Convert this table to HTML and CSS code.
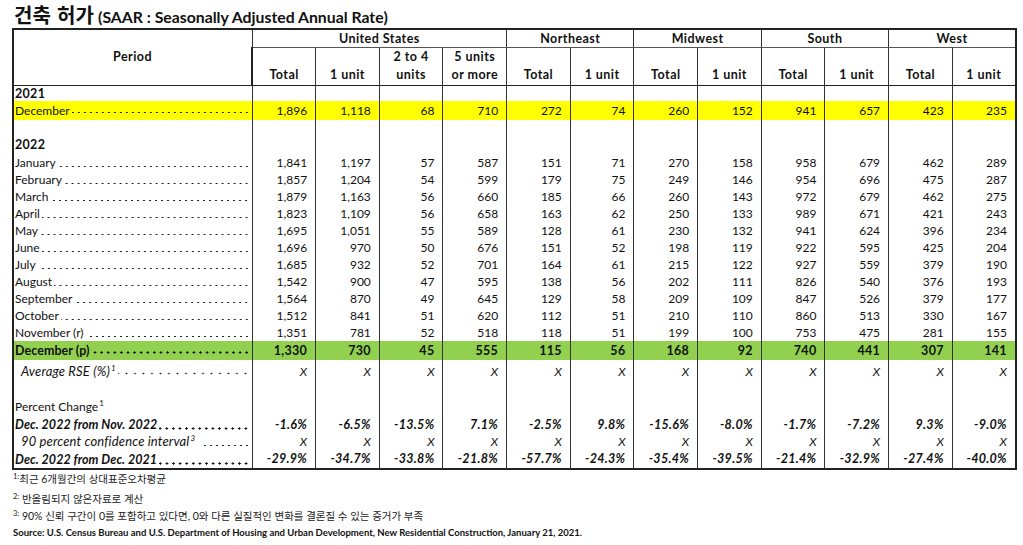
FILE: index.html
```html
<!DOCTYPE html>
<html lang="ko">
<head>
<meta charset="utf-8">
<title>건축 허가</title>
<link rel="stylesheet" href="styles.css">
</head>
<body>
<div class="page">
  <h1 class="title"><span class="ko">건축 허가</span> (SAAR : Seasonally Adjusted Annual Rate)</h1>
  <table class="grid">
    <colgroup>
      <col class="c-period">
      <col><col><col><col><col><col><col><col><col><col><col><col>
    </colgroup>
    <thead>
      <tr class="h1">
        <th rowspan="2" class="period">Period</th>
        <th colspan="4" class="grp">United States</th>
        <th colspan="2" class="grp">Northeast</th>
        <th colspan="2" class="grp">Midwest</th>
        <th colspan="2" class="grp">South</th>
        <th colspan="2" class="grp">West</th>
      </tr>
      <tr class="h2">
        <th>Total</th><th>1 unit</th><th>2 to 4<br>units</th><th>5 units<br>or more</th>
        <th>Total</th><th>1 unit</th><th>Total</th><th>1 unit</th>
        <th>Total</th><th>1 unit</th><th>Total</th><th>1 unit</th>
      </tr>
    </thead>
    <tbody>
      <tr class="r-year"><td class="lbl b">2021</td><td></td><td></td><td></td><td></td><td></td><td></td><td></td><td></td><td></td><td></td><td></td><td></td></tr>
      <tr class="r-hl yellow"><td class="lbl"><div class="lead"><span>December</span></div></td><td>1,896</td><td>1,118</td><td>68</td><td>710</td><td>272</td><td>74</td><td>260</td><td>152</td><td>941</td><td>657</td><td>423</td><td>235</td></tr>
      <tr class="r-gap"><td></td><td></td><td></td><td></td><td></td><td></td><td></td><td></td><td></td><td></td><td></td><td></td><td></td></tr>
      <tr class="r-year2"><td class="lbl b">2022</td><td></td><td></td><td></td><td></td><td></td><td></td><td></td><td></td><td></td><td></td><td></td><td></td></tr>
      <tr class="r"><td class="lbl"><div class="lead"><span>January</span></div></td><td>1,841</td><td>1,197</td><td>57</td><td>587</td><td>151</td><td>71</td><td>270</td><td>158</td><td>958</td><td>679</td><td>462</td><td>289</td></tr>
      <tr class="r"><td class="lbl"><div class="lead"><span>February</span></div></td><td>1,857</td><td>1,204</td><td>54</td><td>599</td><td>179</td><td>75</td><td>249</td><td>146</td><td>954</td><td>696</td><td>475</td><td>287</td></tr>
      <tr class="r"><td class="lbl"><div class="lead"><span>March</span></div></td><td>1,879</td><td>1,163</td><td>56</td><td>660</td><td>185</td><td>66</td><td>260</td><td>143</td><td>972</td><td>679</td><td>462</td><td>275</td></tr>
      <tr class="r"><td class="lbl"><div class="lead"><span>April</span></div></td><td>1,823</td><td>1,109</td><td>56</td><td>658</td><td>163</td><td>62</td><td>250</td><td>133</td><td>989</td><td>671</td><td>421</td><td>243</td></tr>
      <tr class="r"><td class="lbl"><div class="lead"><span>May</span></div></td><td>1,695</td><td>1,051</td><td>55</td><td>589</td><td>128</td><td>61</td><td>230</td><td>132</td><td>941</td><td>624</td><td>396</td><td>234</td></tr>
      <tr class="r"><td class="lbl"><div class="lead"><span>June</span></div></td><td>1,696</td><td>970</td><td>50</td><td>676</td><td>151</td><td>52</td><td>198</td><td>119</td><td>922</td><td>595</td><td>425</td><td>204</td></tr>
      <tr class="r"><td class="lbl"><div class="lead"><span>July</span></div></td><td>1,685</td><td>932</td><td>52</td><td>701</td><td>164</td><td>61</td><td>215</td><td>122</td><td>927</td><td>559</td><td>379</td><td>190</td></tr>
      <tr class="r"><td class="lbl"><div class="lead"><span>August</span></div></td><td>1,542</td><td>900</td><td>47</td><td>595</td><td>138</td><td>56</td><td>202</td><td>111</td><td>826</td><td>540</td><td>376</td><td>193</td></tr>
      <tr class="r"><td class="lbl"><div class="lead"><span>September</span></div></td><td>1,564</td><td>870</td><td>49</td><td>645</td><td>129</td><td>58</td><td>209</td><td>109</td><td>847</td><td>526</td><td>379</td><td>177</td></tr>
      <tr class="r"><td class="lbl"><div class="lead"><span>October</span></div></td><td>1,512</td><td>841</td><td>51</td><td>620</td><td>112</td><td>51</td><td>210</td><td>110</td><td>860</td><td>513</td><td>330</td><td>167</td></tr>
      <tr class="r"><td class="lbl"><div class="lead"><span>November (r)</span></div></td><td>1,351</td><td>781</td><td>52</td><td>518</td><td>118</td><td>51</td><td>199</td><td>100</td><td>753</td><td>475</td><td>281</td><td>155</td></tr>
      <tr class="r-hl green b"><td class="lbl"><div class="lead bold"><span>December (p)</span></div></td><td>1,330</td><td>730</td><td>45</td><td>555</td><td>115</td><td>56</td><td>168</td><td>92</td><td>740</td><td>441</td><td>307</td><td>141</td></tr>
      <tr class="r-rse i"><td class="lbl ind"><div class="lead wide"><span>Average RSE (%)<sup>1</sup></span></div></td><td>X</td><td>X</td><td>X</td><td>X</td><td>X</td><td>X</td><td>X</td><td>X</td><td>X</td><td>X</td><td>X</td><td>X</td></tr>
      <tr class="r-gap"><td></td><td></td><td></td><td></td><td></td><td></td><td></td><td></td><td></td><td></td><td></td><td></td><td></td></tr>
      <tr class="r"><td class="lbl">Percent Change<sup>1</sup></td><td></td><td></td><td></td><td></td><td></td><td></td><td></td><td></td><td></td><td></td><td></td><td></td></tr>
      <tr class="r r-tall b i"><td class="lbl"><div class="lead bold"><span>Dec. 2022 from Nov. 2022</span></div></td><td>-1.6%</td><td>-6.5%</td><td>-13.5%</td><td>7.1%</td><td>-2.5%</td><td>9.8%</td><td>-15.6%</td><td>-8.0%</td><td>-1.7%</td><td>-7.2%</td><td>9.3%</td><td>-9.0%</td></tr>
      <tr class="r i"><td class="lbl ind"><div class="lead"><span>90 percent confidence interval<sup>3</sup>&nbsp;&nbsp;</span></div></td><td>X</td><td>X</td><td>X</td><td>X</td><td>X</td><td>X</td><td>X</td><td>X</td><td>X</td><td>X</td><td>X</td><td>X</td></tr>
      <tr class="r b i last"><td class="lbl"><div class="lead bold"><span>Dec. 2022 from Dec. 2021</span></div></td><td>-29.9%</td><td>-34.7%</td><td>-33.8%</td><td>-21.8%</td><td>-57.7%</td><td>-24.3%</td><td>-35.4%</td><td>-39.5%</td><td>-21.4%</td><td>-32.9%</td><td>-27.4%</td><td>-40.0%</td></tr>
    </tbody>
  </table>
  <div class="notes">
    <p class="note n1"><sup>1:</sup>최근 6개월간의 상대표준오차평균</p>
    <p class="note n2"><sup>2:</sup> 반올림되지 않은자료로 계산</p>
    <p class="note n3"><sup>3:</sup> 90% 신뢰 구간이 0를 포함하고 있다면, 0와 다른 실질적인 변화를 결론질 수 있는 증거가 부족</p>
    <p class="source">Source: U.S. Census Bureau and U.S. Department of Housing and Urban Development, New Residential Construction, January 21, 2021.</p>
  </div>
</div>
</body>
</html>
```

FILE: styles.css
```css
* { box-sizing: border-box; }
html, body { margin: 0; padding: 0; background: #fff; }
body {
  font-family: Lato, "Noto Sans CJK KR", sans-serif;
  color: #111;
  width: 1023px;
  height: 545px;
  overflow: hidden;
}
.page { padding: 0 0 0 12px; }

.title {
  margin: 0;
  height: 28px;
  padding: 3px 0 0 2px;
  font-size: 15.8px;
  line-height: 24px;
  font-weight: 700;
  white-space: nowrap;
}
.title .ko {
  font-family: "Noto Sans CJK KR", sans-serif;
  font-size: 20px;
  font-weight: 700;
  letter-spacing: 0.2px;
}

.grid {
  border-collapse: collapse;
  table-layout: fixed;
  width: 1003px;
  font-size: 12px;
  border: 2px solid #222;
  font-variant-numeric: tabular-nums;
}
.grid col { width: 63.67px; }
.grid col.c-period { width: 239px; }

.grid th, .grid td {
  padding: 0 8px 0 0;
  text-align: right;
  white-space: nowrap;
  border-left: 1.5px solid #333;
  line-height: 17px;
  overflow: hidden;
}
.grid th:first-child, .grid td:first-child { border-left: 2px solid #222; }

.grid th {
  font-weight: 700;
  text-align: center;
  padding: 0;
  font-size: 12.5px;
  letter-spacing: 0.45px;
}
.h1 { height: 18px; }
.h1 .grp { border-bottom: 1px solid #555; line-height: 17px; vertical-align: middle; }
.h1 .grp + .grp { border-left: 1.5px solid #333; }
.h1 .period { vertical-align: middle; border-bottom: 1.5px solid #222; padding-bottom: 2px; }
.h2 { height: 36px; }
.h2 th { vertical-align: bottom; line-height: 18px; padding-bottom: 1px; border-bottom: 1.5px solid #222; }

.r-year { height: 15px; }
.r-year td { line-height: 15px; }
.r-hl { height: 19px; }
.r-hl td { line-height: 19px; }
.r-gap { height: 16px; }
.r-year2 { height: 18px; }
.r-year2 td { line-height: 18px; vertical-align: bottom; }
.r { height: 17px; }
.r.r-tall { height: 18px; }
.r-tall td { vertical-align: bottom; }
.r-rse { height: 22px; }
.r-rse td { vertical-align: middle; padding-top: 1px; }
.r.last td { padding-bottom: 1px; }

.yellow td { background: #ffff00; }
.green td { background: #92d050; }
.b td { font-weight: 700; font-size: 12.5px; letter-spacing: 0.3px; }
.i td { font-style: italic; }

.grid td.lbl { text-align: left; padding: 0 2px 0 1px; }
.grid td.lbl.b { font-weight: 700; font-size: 12.5px; letter-spacing: 0.3px; }
.b td.lbl { letter-spacing: 0.05px; }
.grid td.ind { padding-left: 7px; font-size: 13px; letter-spacing: 0.15px; }

.lead { display: flex; align-items: baseline; }
.lead > span { flex: none; padding-right: 2px; }
.lead::after {
  content: "";
  flex: 1;
  height: 17px;
  align-self: stretch;
  background-image: radial-gradient(circle at 50% 50%, #222 0.75px, transparent 1.1px);
  background-size: 6px 3px;
  background-repeat: repeat-x;
  background-position: right 0 bottom 3px;
}
.r-hl .lead::after { background-position: right 0 bottom 4px; }
.lead.bold::after {
  background-image: radial-gradient(circle at 50% 50%, #111 0.95px, transparent 1.3px);
  background-size: 6.6px 3px;
}
.lead.wide::after { background-size: 8.5px 3px; background-position: right 0 bottom 5px; }

.grid sup { font-size: 8px; line-height: 0; vertical-align: 5px; margin-left: 1px; }

.notes { padding-left: 1px; }
.note {
  margin: 0;
  font-family: Lato, "Noto Sans CJK KR", sans-serif;
  font-size: 10.5px;
  color: #222;
  white-space: nowrap;
}
.note sup { font-size: 7.5px; line-height: 0; vertical-align: 4px; }
.n1 { height: 19px; line-height: 16px; padding-top: 1px; }
.n2 { height: 18px; line-height: 20px; }
.n3 { height: 15px; line-height: 18px; }
.source {
  margin: 0;
  padding-top: 1px;
  line-height: 19px;
  font-size: 9.5px;
  font-weight: 700;
  white-space: nowrap;
  color: #111;
}
```
